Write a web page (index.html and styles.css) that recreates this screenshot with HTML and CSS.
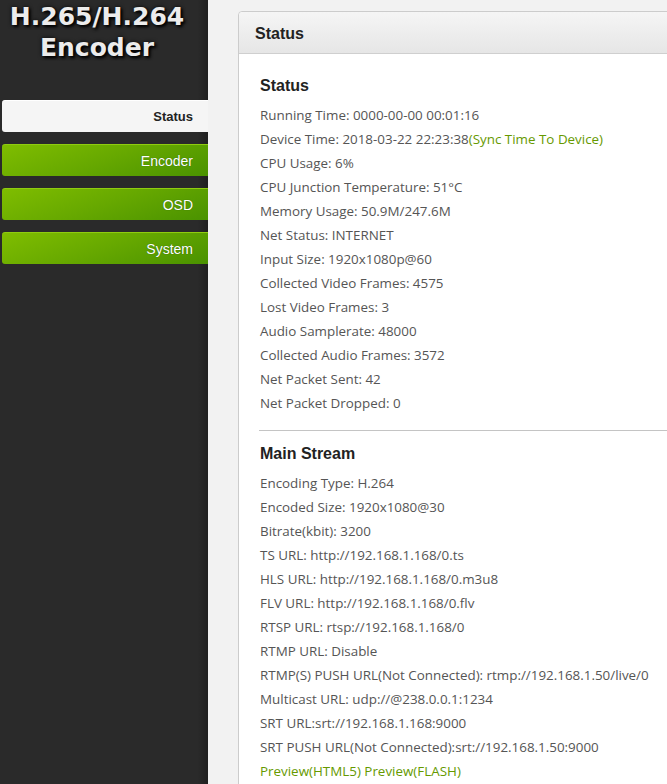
FILE: index.html
```html
<!DOCTYPE html>
<html>
<head>
<meta charset="utf-8">
<link rel="stylesheet" href="styles.css">
</head>
<body>
<div class="layout">
  <aside class="sidebar">
    <div class="logo">H.265/H.264<br>Encoder</div>
    <nav class="nav">
      <a class="nav-item active">Status</a>
      <a class="nav-item">Encoder</a>
      <a class="nav-item">OSD</a>
      <a class="nav-item">System</a>
    </nav>
  </aside>
  <main class="main">
    <section class="panel">
      <header class="panel-head">Status</header>
      <div class="panel-body">
        <h3 class="sec-title">Status</h3>
        <div class="row">Running Time: 0000-00-00 00:01:16</div>
        <div class="row">Device Time: 2018-03-22 22:23:38<span class="link">(Sync Time To Device)</span></div>
        <div class="row">CPU Usage: 6%</div>
        <div class="row">CPU Junction Temperature: 51°C</div>
        <div class="row">Memory Usage: 50.9M/247.6M</div>
        <div class="row">Net Status: INTERNET</div>
        <div class="row">Input Size: 1920x1080p@60</div>
        <div class="row">Collected Video Frames: 4575</div>
        <div class="row">Lost Video Frames: 3</div>
        <div class="row">Audio Samplerate: 48000</div>
        <div class="row">Collected Audio Frames: 3572</div>
        <div class="row">Net Packet Sent: 42</div>
        <div class="row">Net Packet Dropped: 0</div>
        <hr class="sep">
        <h3 class="sec-title">Main Stream</h3>
        <div class="row">Encoding Type: H.264</div>
        <div class="row">Encoded Size: 1920x1080@30</div>
        <div class="row">Bitrate(kbit): 3200</div>
        <div class="row">TS URL: http://192.168.1.168/0.ts</div>
        <div class="row">HLS URL: http://192.168.1.168/0.m3u8</div>
        <div class="row">FLV URL: http://192.168.1.168/0.flv</div>
        <div class="row">RTSP URL: rtsp://192.168.1.168/0</div>
        <div class="row">RTMP URL: Disable</div>
        <div class="row">RTMP(S) PUSH URL(Not Connected): rtmp://192.168.1.50/live/0</div>
        <div class="row">Multicast URL: udp://@238.0.0.1:1234</div>
        <div class="row">SRT URL:srt://192.168.1.168:9000</div>
        <div class="row">SRT PUSH URL(Not Connected):srt://192.168.1.50:9000</div>
        <div class="row"><span class="link">Preview(HTML5)</span> <span class="link">Preview(FLASH)</span></div>
      </div>
    </section>
  </main>
</div>
</body>
</html>
```
FILE: styles.css
```css
html, body {
  margin: 0;
  padding: 0;
  height: 100%;
  overflow: hidden;
}
body {
  background: #f2f2f2;
  font-family: "Liberation Sans", Arial, sans-serif;
}
.layout {
  display: flex;
  height: 784px;
}
.sidebar {
  width: 208px;
  flex: 0 0 208px;
  background: #2a2a2a;
  background-image: linear-gradient(to right, rgba(0,0,0,0) 95%, rgba(0,0,0,0.25));
}
.logo {
  width: 194px;
  text-align: center;
  color: #ececec;
  font-family: "DejaVu Sans", Verdana, sans-serif;
  font-weight: bold;
  font-size: 25px;
  line-height: 31px;
  padding-top: 1px;
  text-shadow: 2px 2px 3px #000, 0 0 4px rgba(0,0,0,0.8);
}
.nav {
  display: flex;
  flex-direction: column;
  gap: 12px;
  margin-top: 37px;
  padding-left: 2px;
}
.nav-item {
  display: block;
  height: 32px;
  line-height: 32px;
  text-align: right;
  padding-right: 15px;
  border-radius: 3px 0 0 3px;
  font-size: 14px;
  color: #fff;
  background: linear-gradient(160deg, #7fbd00 0%, #66a800 50%, #4a9200 100%);
  border-top: 1px solid #8fcc10;
  box-sizing: border-box;
  text-shadow: 0 0 1px #2a5a00;
}
.nav-item.active {
  background: #f5f5f5;
  color: #222;
  font-weight: bold;
  font-size: 13px;
  border-top: 1px solid #fff;
  text-shadow: none;
}
.main {
  flex: 1;
  overflow: hidden;
  padding: 11px 0 0 30px;
}
.panel {
  width: 520px;
  background: #fff;
  border: 1px solid #ccc;
  border-radius: 4px 0 0 0;
  min-height: 800px;
}
.panel-head {
  height: 41px;
  line-height: 41px;
  padding: 1px 0 0 16px;
  box-sizing: border-box;
  height: 42px;
  font-weight: bold;
  font-size: 16px;
  color: #222;
  background: linear-gradient(#f5f5f5, #e6e6e6);
  border-bottom: 1px solid #cfcfcf;
  border-radius: 4px 0 0 0;
}
.panel-body {
  padding: 21px 0 0 21px;
}
.sec-title {
  margin: 0 0 6px 0;
  font-size: 16px;
  line-height: 22px;
  font-weight: bold;
  color: #222;
}
.row {
  font-family: "Open Sans", "Noto Sans", sans-serif;
  font-size: 13.4px;
  line-height: 24px;
  color: #555;
  white-space: nowrap;
}
.link {
  color: #669900;
}
.sep {
  border: 0;
  border-top: 1px solid #c4c4c4;
  margin: 15px 0 12px -1px;
  height: 0;
}
```
